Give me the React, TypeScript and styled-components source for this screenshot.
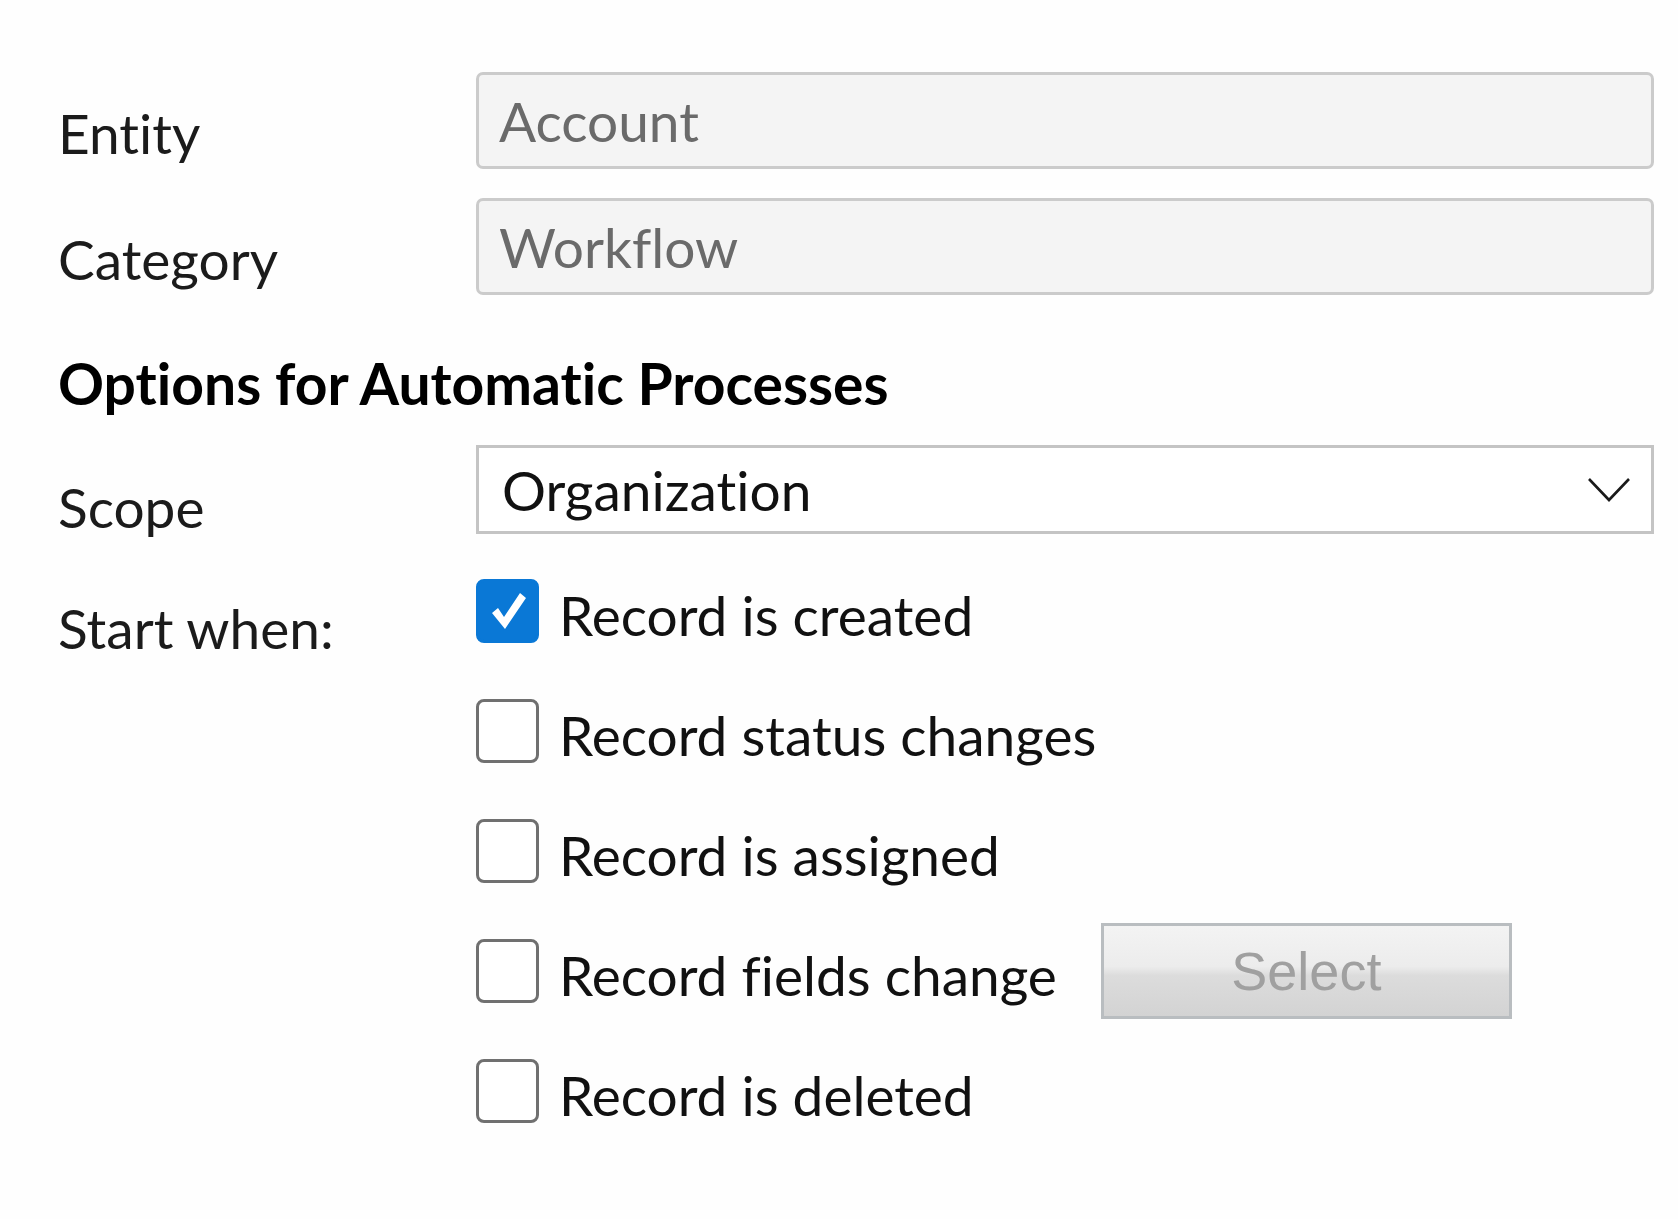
import React from "react"
import styled, { createGlobalStyle } from "styled-components"

const GlobalStyles = createGlobalStyle`
  html, body {
    margin: 0;
    padding: 0;
    background: #fefefe;
  }
  body {
    font-family: Lato, "Open Sans", sans-serif;
    font-variant-ligatures: none;
    color: #1b1b1b;
  }
`

const Root = styled.div`
  padding: 72px 24px 80px 58px;
  display: flex;
  flex-direction: column;
`

const Row = styled.div<{ $gap?: number }>`
  display: flex;
  align-items: flex-start;
  margin-bottom: ${(p) => p.$gap ?? 0}px;
`

const Label = styled.div<{ $top?: number }>`
  width: 418px;
  flex: none;
  font-size: 55px;
  line-height: 60px;
  padding-top: ${(p) => p.$top ?? 31}px;
`

const ReadOnlyField = styled.div`
  flex: 1;
  height: 97px;
  box-sizing: border-box;
  background: #f4f4f4;
  border: 3px solid #cbcbcb;
  border-radius: 7px;
  padding: 0 20px;
  display: flex;
  align-items: center;
  font-size: 55px;
  color: #6a6a6a;
`

const Heading = styled.h2`
  margin: 12px 0 32px 0;
  font-size: 57px;
  font-weight: 700;
  line-height: 60px;
  color: #000;
`

const Dropdown = styled.div`
  flex: 1;
  height: 89px;
  box-sizing: border-box;
  background: #fff;
  border: 3px solid #c4c4c4;
  padding: 0 20px 0 23px;
  display: flex;
  align-items: center;
  justify-content: space-between;
  font-size: 55px;
  color: #111;
`

const OptionList = styled.div`
  flex: 1;
  display: flex;
  flex-direction: column;
  margin-top: -4px;
`

const Option = styled.div`
  height: 120px;
  display: flex;
  align-items: flex-start;
`

const OptionLine = styled.div`
  height: 64px;
  display: flex;
  align-items: center;
  gap: 20px;
`

const Box = styled.div<{ $checked?: boolean }>`
  width: 63px;
  height: 64px;
  box-sizing: border-box;
  border-radius: 8px;
  flex: none;
  display: flex;
  align-items: center;
  justify-content: center;
  background: ${(p) => (p.$checked ? "#0a78d6" : "#fff")};
  border: 3px solid ${(p) => (p.$checked ? "#0a78d6" : "#707070")};
`

const OptionText = styled.span`
  font-size: 55px;
  line-height: 60px;
  color: #111;
  padding-top: 8px;
`

const SelectButton = styled.button`
  margin-left: 24px;
  width: 411px;
  height: 96px;
  box-sizing: border-box;
  border: 3px solid #b9bdc0;
  background: linear-gradient(#f3f3f3 0%, #ececec 45%, #dcdcdc 55%, #d3d3d3 100%);
  font-family: "Liberation Sans", Arial, sans-serif;
  font-size: 54px;
  color: #a0a0a0;
  padding: 0;
`

const Chevron = () => (
  <svg width="44" height="28" viewBox="0 0 44 28">
    <polyline points="2,3 22,24 42,3" fill="none" stroke="#1a1a1a" strokeWidth="2.6" />
  </svg>
)

const Check = () => (
  <svg width="40" height="44" viewBox="0 0 40 44">
    <path d="M4 24 L10 19 L16 28 L32 4 L38 9 L17 40 Z" fill="#fff" />
  </svg>
)

const options = [
  { text: "Record is created", checked: true },
  { text: "Record status changes" },
  { text: "Record is assigned" },
  { text: "Record fields change", button: true },
  { text: "Record is deleted" },
]

export default function App() {
  return (
    <Root>
      <GlobalStyles />
      <Row $gap={29}>
        <Label>Entity</Label>
        <ReadOnlyField>Account</ReadOnlyField>
      </Row>
      <Row $gap={46}>
        <Label>Category</Label>
        <ReadOnlyField>Workflow</ReadOnlyField>
      </Row>
      <Heading>Options for Automatic Processes</Heading>
      <Row $gap={46}>
        <Label $top={32}>Scope</Label>
        <Dropdown>
          Organization
          <Chevron />
        </Dropdown>
      </Row>
      <Row>
        <Label $top={15}>Start when:</Label>
        <OptionList>
          {options.map((o) => (
            <Option key={o.text}>
              <OptionLine>
                <Box $checked={o.checked}>{o.checked && <Check />}</Box>
                <OptionText>{o.text}</OptionText>
                {o.button && <SelectButton>Select</SelectButton>}
              </OptionLine>
            </Option>
          ))}
        </OptionList>
      </Row>
    </Root>
  )
}
